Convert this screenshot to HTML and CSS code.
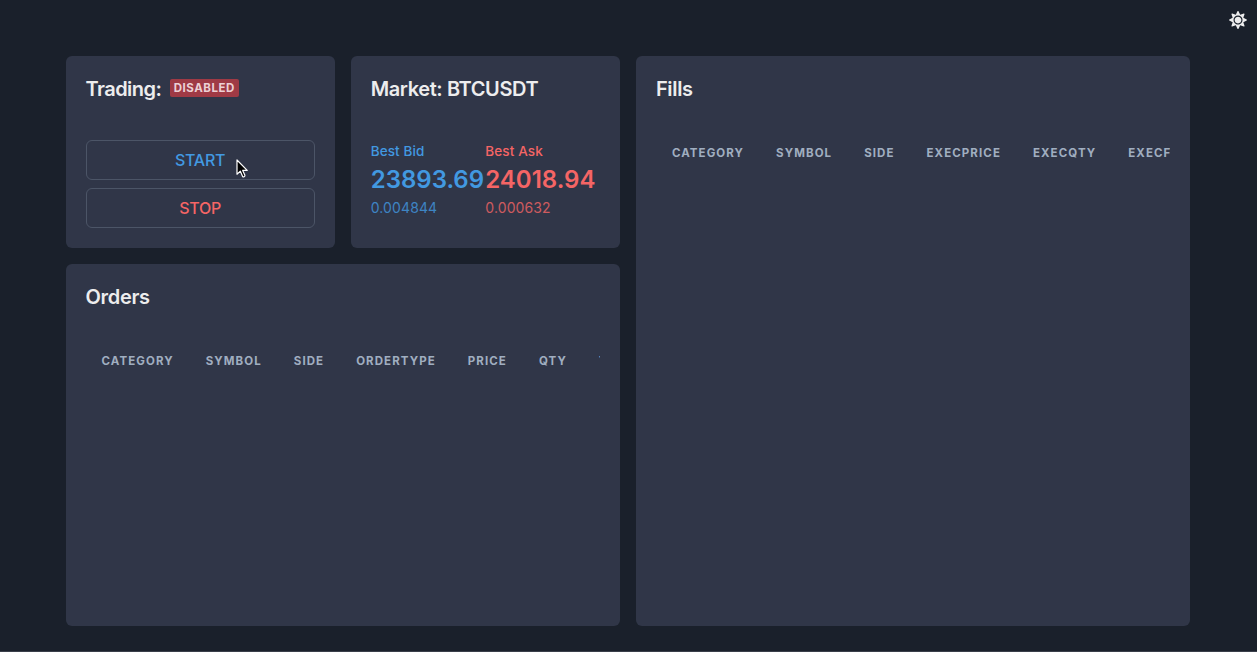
FILE: index.html
```html
<!DOCTYPE html>
<html lang="en">
<head>
<meta charset="utf-8">
<title>Trading</title>
<link rel="stylesheet" href="styles.css">
</head>
<body>
<header class="topbar">
  <svg class="sun" viewBox="0 0 512 512" fill="currentColor"><path d="M256 160c-52.9 0-96 43.1-96 96s43.1 96 96 96 96-43.1 96-96-43.1-96-96-96zm246.4 80.5l-94.7-47.3 33.5-100.4c4.5-13.6-8.4-26.5-21.9-21.9l-100.4 33.5-47.4-94.8c-6.4-12.8-24.6-12.8-31 0l-47.3 94.7L92.7 70.8c-13.6-4.5-26.5 8.4-21.9 21.9l33.5 100.4-94.7 47.4c-12.8 6.4-12.8 24.6 0 31l94.7 47.3-33.5 100.5c-4.5 13.6 8.4 26.5 21.9 21.9l100.4-33.5 47.3 94.7c6.4 12.8 24.6 12.8 31 0l47.3-94.7 100.4 33.5c13.6 4.5 26.5-8.4 21.9-21.9l-33.5-100.4 94.7-47.3c13-6.5 13-24.7.2-31.1zm-155.9 106c-49.9 49.9-131.1 49.9-181 0-49.9-49.9-49.9-131.1 0-181 49.9-49.9 131.1-49.9 181 0 49.9 49.9 49.9 131.1 0 181z"/></svg>
</header>
<main class="grid">
  <section class="card trading">
    <h2 class="title"><span class="name">Trading:</span><span class="badge">DISABLED</span></h2>
    <div class="buttons">
      <button class="btn bid">START</button>
      <button class="btn ask">STOP</button>
    </div>
  </section>
  <section class="card market">
    <h2 class="title">Market: BTCUSDT</h2>
    <div class="stats">
      <dl class="stat bid"><dt class="label">Best Bid</dt><dd class="number">23893.69</dd><dd class="help">0.004844</dd></dl>
      <dl class="stat ask"><dt class="label">Best Ask</dt><dd class="number">24018.94</dd><dd class="help">0.000632</dd></dl>
    </div>
  </section>
  <section class="card fills">
    <h2 class="title">Fills</h2>
    <div class="columns"><span>CATEGORY</span><span>SYMBOL</span><span>SIDE</span><span>EXECPRICE</span><span>EXECQTY</span><span>EXECFEE</span></div>
  </section>
  <section class="card orders">
    <h2 class="title">Orders</h2>
    <div class="columns"><span>CATEGORY</span><span>SYMBOL</span><span>SIDE</span><span>ORDERTYPE</span><span>PRICE</span><span>QTY</span><span>T</span></div>
  </section>
</main>
<svg class="cursor" viewBox="0 0 12 19"><path d="M1 1v14.2l3.3-3.1 2.2 5.1c.3.7 1 .8 1.6.5.7-.3 1-.9.7-1.6l-2.1-4.7h4.5z" fill="#000" stroke="#fff" stroke-width="1.2" stroke-linejoin="round"/></svg>
</body>
</html>
```
FILE: styles.css
```css
* { box-sizing: border-box; margin: 0; padding: 0; }
body {
  height: 652px;
  overflow: hidden;
  display: flex;
  flex-direction: column;
  background: #1a202b;
  border-bottom: 1px solid #3a3f4a;
  color: #ededee;
  font-family: Inter, "Liberation Sans", sans-serif;
}
.topbar {
  height: 56px;
  flex: none;
  display: flex;
  justify-content: flex-end;
  padding: 11px 10px 0 0;
}
.sun { width: 18px; height: 18px; }
.grid {
  width: 1124.8px;
  margin-left: 65.5px;
  display: grid;
  grid-template-columns: repeat(4, 1fr);
  grid-template-rows: 192px 362px;
  gap: 16px;
}
.card { background: #303648; border-radius: 6px; padding: 20px; min-width: 0; }
.fills { grid-column: 3 / 5; grid-row: 1 / 3; }
.orders { grid-column: 1 / 3; grid-row: 2; }
.title {
  height: 24px;
  margin-bottom: 40px;
  display: flex;
  align-items: center;
  gap: 8px;
  padding-top: 1px;
  font-size: 20px;
  font-weight: 640;
  line-height: 24px;
  letter-spacing: -.32px;
  white-space: nowrap;
}
.name { width: 76.3px; letter-spacing: -.55px; }
.badge {
  width: 69px;
  margin-bottom: 2px;
  padding: 0 0 0 4px;
  border-radius: 2px;
  background: #9f3a45;
  color: #ecd0d5;
  font-size: 11.5px;
  font-weight: 700;
  line-height: 18px;
  letter-spacing: .52px;
}
.market .title { letter-spacing: -.4px; }
.bid { color: #4299e1; }
.ask { color: #f56565; }
.buttons { display: flex; flex-direction: column; gap: 8px; }
.btn {
  height: 40px;
  border: 1px solid #4c5567;
  border-radius: 6px;
  background: transparent;
  font: 550 16px/24px Inter, "Liberation Sans", sans-serif;
  letter-spacing: -.3px;
}
.stats { display: grid; grid-template-columns: 1fr 1fr; }
.stat { min-width: 0; }
.label { height: 21px; padding-top: 1px; font-size: 13.5px; font-weight: 500; line-height: 21px; letter-spacing: .12px; }
.number { height: 36px; padding-top: 1px; font-size: 24px; font-weight: 600; line-height: 36px; }
.help { font-size: 14px; line-height: 21px; letter-spacing: .12px; opacity: .8; }
.columns {
  display: flex;
  overflow: hidden;
  color: #a0aec0;
  font-size: 11.5px;
  font-weight: 700;
  line-height: 16px;
  letter-spacing: 1.08px;
}
.columns span { flex: none; padding: 5px 16px 3px; }
.cursor { position: absolute; left: 235.5px; top: 159px; width: 12px; height: 19px; }
```
